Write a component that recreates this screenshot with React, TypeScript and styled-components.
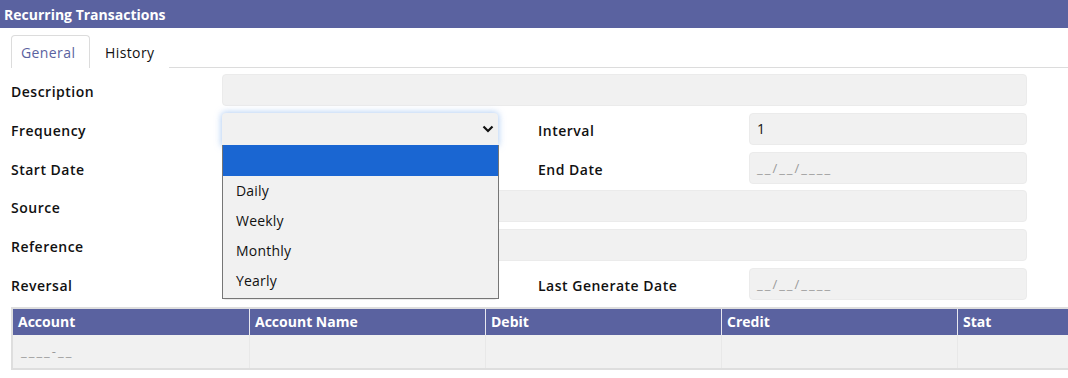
import styled, { createGlobalStyle } from 'styled-components';

const GlobalStyle = createGlobalStyle`
	body {
		margin: 0;
		background: white;
		font-family: "Open Sans", Lato, sans-serif;
		color: #111;
		overflow: hidden;
		letter-spacing: 0.4px;
	}
`

const TitleBar = styled.div`
	background: #5a62a0;
	height: 28px;
	display: flex;
	align-items: center;
	padding-left: 4px;
	color: white;
	font-weight: 700;
	font-size: 14px;
	letter-spacing: 0;
`

const Content = styled.div`
	padding-left: 11px;
	overflow: hidden;
`

const Tabs = styled.div`
	display: flex;
	margin-top: 7px;
	border-bottom: 1px solid #dcdcdc;
	height: 32px;
`

const Tab = styled.div<{ active?: boolean }>`
	display: flex;
	align-items: center;
	padding: 0 14px 0 ${props => props.active ? '9px' : '14px'};
	width: ${props => props.active ? '54px' : 'auto'};
	font-size: 14px;
	font-weight: 500;
	color: ${props => props.active ? '#5a62a0' : '#111'};
	border: 1px solid ${props => props.active ? '#dcdcdc' : 'transparent'};
	border-bottom: none;
	border-radius: 4px 4px 0 0;
	background: white;
	margin-bottom: -1px;
`

const Form = styled.div`
	display: grid;
	grid-template-columns: 211px 276px 40px 211px 278px;
	grid-auto-rows: 32px;
	row-gap: 6.8px;
	margin-top: 6px;
`

const Label = styled.div`
	align-self: center;
	padding-top: 3px;
	font-size: 14px;
	font-weight: 600;
	letter-spacing: 0.5px;
	color: #111;
`

const Field = styled.div<{ span?: string }>`
	grid-column: ${props => props.span || 'auto'};
	background: #f1f1f1;
	border: 1px solid #ebebeb;
	border-radius: 4px;
	display: flex;
	align-items: center;
	padding: 0 7px;
	font-size: 14px;
	color: #111;
	box-sizing: border-box;
`

const Mask = styled.span`
	color: #9a9a9a;
	font-size: 13px;
	letter-spacing: 2px;
`

const SelectWrap = styled.div`
	position: relative;
	grid-column: 2;
`

const SelectBox = styled.div`
	height: 32px;
	background: #f1f1f1;
	border-radius: 4px 4px 0 0;
	box-shadow: 0 0 6px 1px rgba(120, 170, 235, 0.55);
	display: flex;
	align-items: center;
	justify-content: flex-end;
	padding-right: 3px;
	box-sizing: border-box;
`

const Listbox = styled.div`
	position: absolute;
	top: 32px;
	left: 0;
	width: 277px;
	background: #f1f1f1;
	border: 1px solid #767676;
	border-top: none;
	box-sizing: border-box;
	z-index: 5;
	padding-bottom: 2px;
`

const Option = styled.div<{ selected?: boolean }>`
	height: ${props => props.selected ? '31px' : '30px'};
	display: flex;
	align-items: center;
	padding-left: 13px;
	font-size: 14px;
	letter-spacing: 0.2px;
	background: ${props => props.selected ? '#1a66d2' : 'transparent'};
	color: ${props => props.selected ? 'white' : '#111'};
`

const Table = styled.div`
	margin-top: 7px;
	border: 2px solid #dedede;
	border-right: none;
	width: 1200px;
`

const Row = styled.div`
	display: grid;
	grid-template-columns: repeat(5, 236px);
`

const HeadCell = styled.div`
	background: #5a62a0;
	color: white;
	font-weight: 700;
	font-size: 14px;
	letter-spacing: 0;
	height: 26px;
	display: flex;
	align-items: center;
	padding-left: 5px;
	border-left: 1px solid #e8e8f0;
	&:first-child { border-left: none; }
`

const Cell = styled.div`
	background: #f1f1f1;
	height: 33px;
	display: flex;
	align-items: center;
	padding-left: 8px;
	border-left: 1px solid #e8e8e8;
	&:first-child { border-left: none; }
`

const Chevron = () => (
	<svg width="14" height="14" viewBox="0 0 14 14">
		<polyline points="2.5,4.5 7,9 11.5,4.5" fill="none" stroke="#111" strokeWidth="2.2" />
	</svg>
)

const options = ['Daily', 'Weekly', 'Monthly', 'Yearly']
const columns = ['Account', 'Account Name', 'Debit', 'Credit', 'Stat']

const App = () => {
	return (
		<>
			<GlobalStyle />
			<TitleBar>Recurring Transactions</TitleBar>
			<Content>
				<Tabs>
					<Tab active>General</Tab>
					<Tab>History</Tab>
				</Tabs>
				<Form>
					<Label>Description</Label>
					<Field span="2 / 6" />

					<Label>Frequency</Label>
					<SelectWrap>
						<SelectBox><Chevron /></SelectBox>
						<Listbox>
							<Option selected />
							{options.map(o => <Option key={o}>{o}</Option>)}
						</Listbox>
					</SelectWrap>
					<div />
					<Label>Interval</Label>
					<Field>1</Field>

					<Label>Start Date</Label>
					<Field />
					<div />
					<Label>End Date</Label>
					<Field><Mask>__/__/____</Mask></Field>

					<Label>Source</Label>
					<Field span="2 / 6" />

					<Label>Reference</Label>
					<Field span="2 / 6" />

					<Label>Reversal</Label>
					<Field />
					<div />
					<Label>Last Generate Date</Label>
					<Field><Mask>__/__/____</Mask></Field>
				</Form>
				<Table>
					<Row>
						{columns.map(c => <HeadCell key={c}>{c}</HeadCell>)}
					</Row>
					<Row>
						<Cell><Mask>____-__</Mask></Cell>
						<Cell />
						<Cell />
						<Cell />
						<Cell />
					</Row>
				</Table>
			</Content>
		</>
	)
}

export default App;
